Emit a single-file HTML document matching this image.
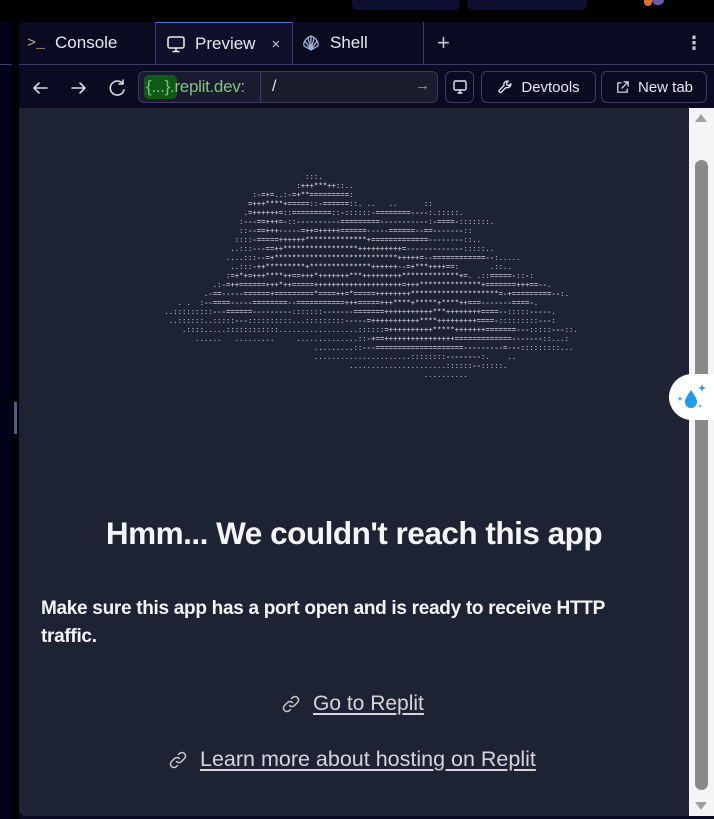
<!DOCTYPE html>
<html><head><meta charset="utf-8"><style>
*{margin:0;padding:0;box-sizing:border-box}
body{width:714px;height:819px;background:#000;position:relative;overflow:hidden;font-family:"Liberation Sans","DejaVu Sans",sans-serif;color:#f5f5f7}
.abs{position:absolute}
#left{left:0;top:22px;width:12px;height:797px;background:#02021a}
#main{left:19px;top:22px;width:695px;height:797px;background:#0a0a20;border-radius:6px 0 0 0}
.tab{position:absolute;top:0;height:42px;display:flex;align-items:center;font-size:17px;color:#e8e8f0}
#tabline{left:0;top:42px;width:695px;height:1px;background:#3b3a6a}
#content{left:0;top:86px;width:695px;height:708px;background:#1e2333;border-radius:0 0 6px 6px}
.btn{position:absolute;top:49px;height:32px;border:1px solid #3b3a6a;border-radius:6px;display:flex;align-items:center;justify-content:center;font-size:15px;color:#e8e8f0;gap:8px}
pre{position:absolute;left:160px;top:174px;font-family:"Liberation Mono",monospace;font-size:7.33px;line-height:9px;color:#b8bcc6;font-weight:bold;letter-spacing:0}
a{color:#d4d6dc;text-decoration:underline;text-underline-offset:3px}
</style></head><body>
<div class="abs" style="left:352px;top:0;width:108px;height:10px;background:#0d1030;border-radius:0 0 6px 6px"></div>
<div class="abs" style="left:467px;top:0;width:120px;height:10px;background:#0d1030;border-radius:0 0 6px 6px"></div>
<div class="abs" style="left:644px;top:0;width:8px;height:6px;background:#e07030;border-radius:0 0 4px 4px"></div>
<div class="abs" style="left:652px;top:0;width:12px;height:5px;background:#6a5aa0;border-radius:0 0 6px 6px"></div>
<div id="left" class="abs"></div>
<div class="abs" style="left:0;top:64px;width:12px;height:1px;background:#3b3a6a"></div>
<div class="abs" style="left:14px;top:402px;width:3px;height:32px;background:#5b5590"></div>
<div id="main" class="abs">
  <div class="tab" style="left:8px;width:128px"><span style="color:#c9b27a;font-size:15px;margin-right:10px;font-family:'Liberation Mono',monospace">&gt;_</span>Console</div>
  <div class="tab" style="left:136px;width:138px;background:#10102c;border-top:1px solid #4a6fe0;border-left:1px solid #3b3a6a;border-right:1px solid #3b3a6a;height:43px;padding-left:10px">
    <svg width="20" height="20" viewBox="0 0 20 20" fill="none" stroke="#e8e8f0" stroke-width="1.6" style="margin-right:9px"><rect x="2" y="3" width="16" height="11" rx="2"/><path d="M10 14v3M6.5 17.5h7"/></svg>Preview<span style="margin-left:16px;font-size:15px;color:#c8c8d0">×</span></div>
  <div class="tab" style="left:282px;width:122px">
    <svg width="20" height="20" viewBox="0 0 20 20" fill="none" stroke="#9fb0d0" stroke-width="1.3" style="margin-right:9px"><path d="M10 3C5 5 2 9 3 13l7 4 7-4c1-4-2-8-7-10z"/><path d="M10 3v14M7 5l3 12M13 5l-3 12M4 8l6 9M16 8l-6 9"/></svg>Shell</div>
  <div class="abs" style="left:404px;top:0;width:1px;height:42px;background:#3b3a6a"></div>
  <div class="tab" style="left:418px;font-size:22px;color:#c8c8d0;font-weight:300">+</div>
  <div class="tab" style="left:666px;font-size:18px;color:#c8c8d0;font-weight:bold">⋮</div>
  <div id="tabline" class="abs"></div>
  <svg class="abs" style="left:12px;top:56px" width="100" height="20" viewBox="0 0 100 20" fill="none" stroke="#d8d8e0" stroke-width="1.6" stroke-linecap="round" stroke-linejoin="round">
    <path d="M16 10H3M8 5l-5 5 5 5"/><path d="M41 10h13M49 5l5 5-5 5"/><path d="M92 6a7 7 0 1 0 1 6M92 2v4h-4"/></svg>
  <div class="abs" style="left:119px;top:49px;width:300px;height:32px;background:#1a1a30;border:1px solid #3b3a6a;border-radius:6px;overflow:hidden">
    <div class="abs" style="left:5px;top:3px;width:33px;height:24px;background:#0c5c18;border-radius:5px"></div>
    <div class="abs" style="left:7px;top:5px;font-size:17px;color:#7cc67c;white-space:nowrap;letter-spacing:-0.3px">{...}.replit.dev:</div>
    <div class="abs" style="left:121px;top:0;width:1px;height:32px;background:#3b3a6a"></div>
    <div class="abs" style="left:122px;top:0;right:0;height:32px;background:#1c1d2c"></div>
    <div class="abs" style="left:133px;top:6px;font-size:16px;color:#e8e8f0">/</div>
    <div class="abs" style="left:276px;top:5px;font-size:15px;color:#9a9aa8">→</div>
  </div>
  <div class="btn" style="left:426px;width:29px"><svg width="16" height="16" viewBox="0 0 16 16" fill="none" stroke="#e8e8f0" stroke-width="1.4"><rect x="2" y="2" width="12" height="9" rx="1.5"/><path d="M8 11v3M5.5 14h5"/></svg></div>
  <div class="btn" style="left:462px;width:115px"><svg width="16" height="16" viewBox="0 0 16 16" fill="none" stroke="#e8e8f0" stroke-width="1.3"><path d="M10 2a3.5 3.5 0 0 0-3 4.5L2.5 11a1.4 1.4 0 0 0 2 2L9 8.5A3.5 3.5 0 0 0 13.8 5l-2 1.5-1.8-.5-.5-1.8L11 2.2z"/></svg>Devtools</div>
  <div class="btn" style="left:582px;width:106px"><svg width="15" height="15" viewBox="0 0 16 16" fill="none" stroke="#e8e8f0" stroke-width="1.3"><path d="M7 3H3v10h10V9M9 2h5v5M14 2L7 9"/></svg>New tab</div>
  <div id="content" class="abs">
    <div class="abs" style="right:0;top:0;width:25px;height:708px;background:#f5f5f5"></div>
    <div class="abs" style="right:7px;top:6px;width:0;height:0;border-left:6px solid transparent;border-right:6px solid transparent;border-bottom:8px solid #a0a0a0"></div>
    <div class="abs" style="right:6px;top:52px;width:13px;height:630px;background:#8a8a8a;border-radius:7px"></div>
    <div class="abs" style="right:7px;bottom:6px;width:0;height:0;border-left:6px solid transparent;border-right:6px solid transparent;border-top:8px solid #a0a0a0"></div>
    <div class="abs" style="left:650px;top:266px;width:50px;height:46px;background:#fff;border-radius:23px 0 0 23px"></div>
    <svg class="abs" style="left:657px;top:274px" width="32" height="32" viewBox="0 0 32 32" fill="#1d9bf0"><path d="M15 8c-3 5-6 8-6 12a6 6 0 0 0 12 0c0-4-3-7-6-12z"/><path d="M26 2l1 3 3 1-3 1-1 3-1-3-3-1 3-1z"/><path d="M4 14l.7 2 2 .7-2 .7-.7 2-.7-2-2-.7 2-.7z"/><path d="M24 22l.5 1.5 1.5.5-1.5.5-.5 1.5-.5-1.5-1.5-.5 1.5-.5z"/></svg>
    <div class="abs" style="left:0;width:670px;top:407px;text-align:center;font-size:31.5px;font-weight:bold;color:#f5f5f7;letter-spacing:-0.5px">Hmm... We couldn't reach this app</div>
    <div class="abs" style="left:22px;top:487px;width:600px;font-size:19px;font-weight:bold;line-height:28px;color:#f5f5f7;letter-spacing:-0.3px">Make sure this app has a port open and is ready to receive HTTP traffic.</div>
    <div class="abs" style="left:262px;top:584px;font-size:21px;display:flex;align-items:center;gap:12px;color:#d4d6dc"><svg width="20" height="20" viewBox="0 0 20 20" fill="none" stroke="#c8cad0" stroke-width="1.5" stroke-linecap="round"><path d="M8.5 11.5a3.5 3.5 0 0 0 5 0l3-3a3.5 3.5 0 0 0-5-5l-1 1"/><path d="M11.5 8.5a3.5 3.5 0 0 0-5 0l-3 3a3.5 3.5 0 0 0 5 5l1-1"/></svg><a>Go to Replit</a></div>
    <div class="abs" style="left:149px;top:639px;font-size:21.5px;display:flex;align-items:center;gap:12px;color:#d4d6dc"><svg width="20" height="20" viewBox="0 0 20 20" fill="none" stroke="#c8cad0" stroke-width="1.5" stroke-linecap="round"><path d="M8.5 11.5a3.5 3.5 0 0 0 5 0l3-3a3.5 3.5 0 0 0-5-5l-1 1"/><path d="M11.5 8.5a3.5 3.5 0 0 0-5 0l-3 3a3.5 3.5 0 0 0 5 5l1-1"/></svg><a>Learn more about hosting on Replit</a></div>
  </div>
</div>
<pre>
                                 :::.
                               :+++***++::..
                     :-=+=..:-=+**=========:
                    =+++****+=====::-======::. ..   ..      ::
                   .=++++++=::=========::-::::::-========----:.:::::.
                  :---==+++=-::----------=========-----------:-====-:::::::.
                  ::--==+++-----=++=+++++======-----======--==-------::
                 ::::-=====++++++**************+=============--------::..
                ..:::---==++*****************++++++++++=-------------:::::..
               ....:::--=+****************************+++++=--============--:.....
                ..:::-++*********+**************++++++--=+***++++==:       .::..
               :=+*+=+++****++==+++*+++++++***+++++++++*************+=. .::=====-::-:
            .:-=++======+++*++=====++++++++++++++++++++=+++**************+=======+++==--.
          .-==-----======+=========*====++=*=====++++++++********************=-+=========--:.
    . .  :--====-----========--===========+++=====+++****+*****+****++===-------====-.
 ..:::::::::---======---------:::::::-------=======+++++++++++***++++++++====--:::::-----.
  ..::::::..:::::---::::::::::...:::::::::-----=+++++++++++****+++++++++====-:::::::::---:
     .::::.....::::::::::::..................::::::=++++++++++*****+++++++=======---:::::---::.
        ......   .........     ..............::-+==++++++++++++++++=============-------::...:
                                   .........::---====================---------=---:::::::::...
                                   ......................::::::::--------:.    ..
                                           ......................::::::--:::::.
                                                            ..........
</pre>
</body></html>
